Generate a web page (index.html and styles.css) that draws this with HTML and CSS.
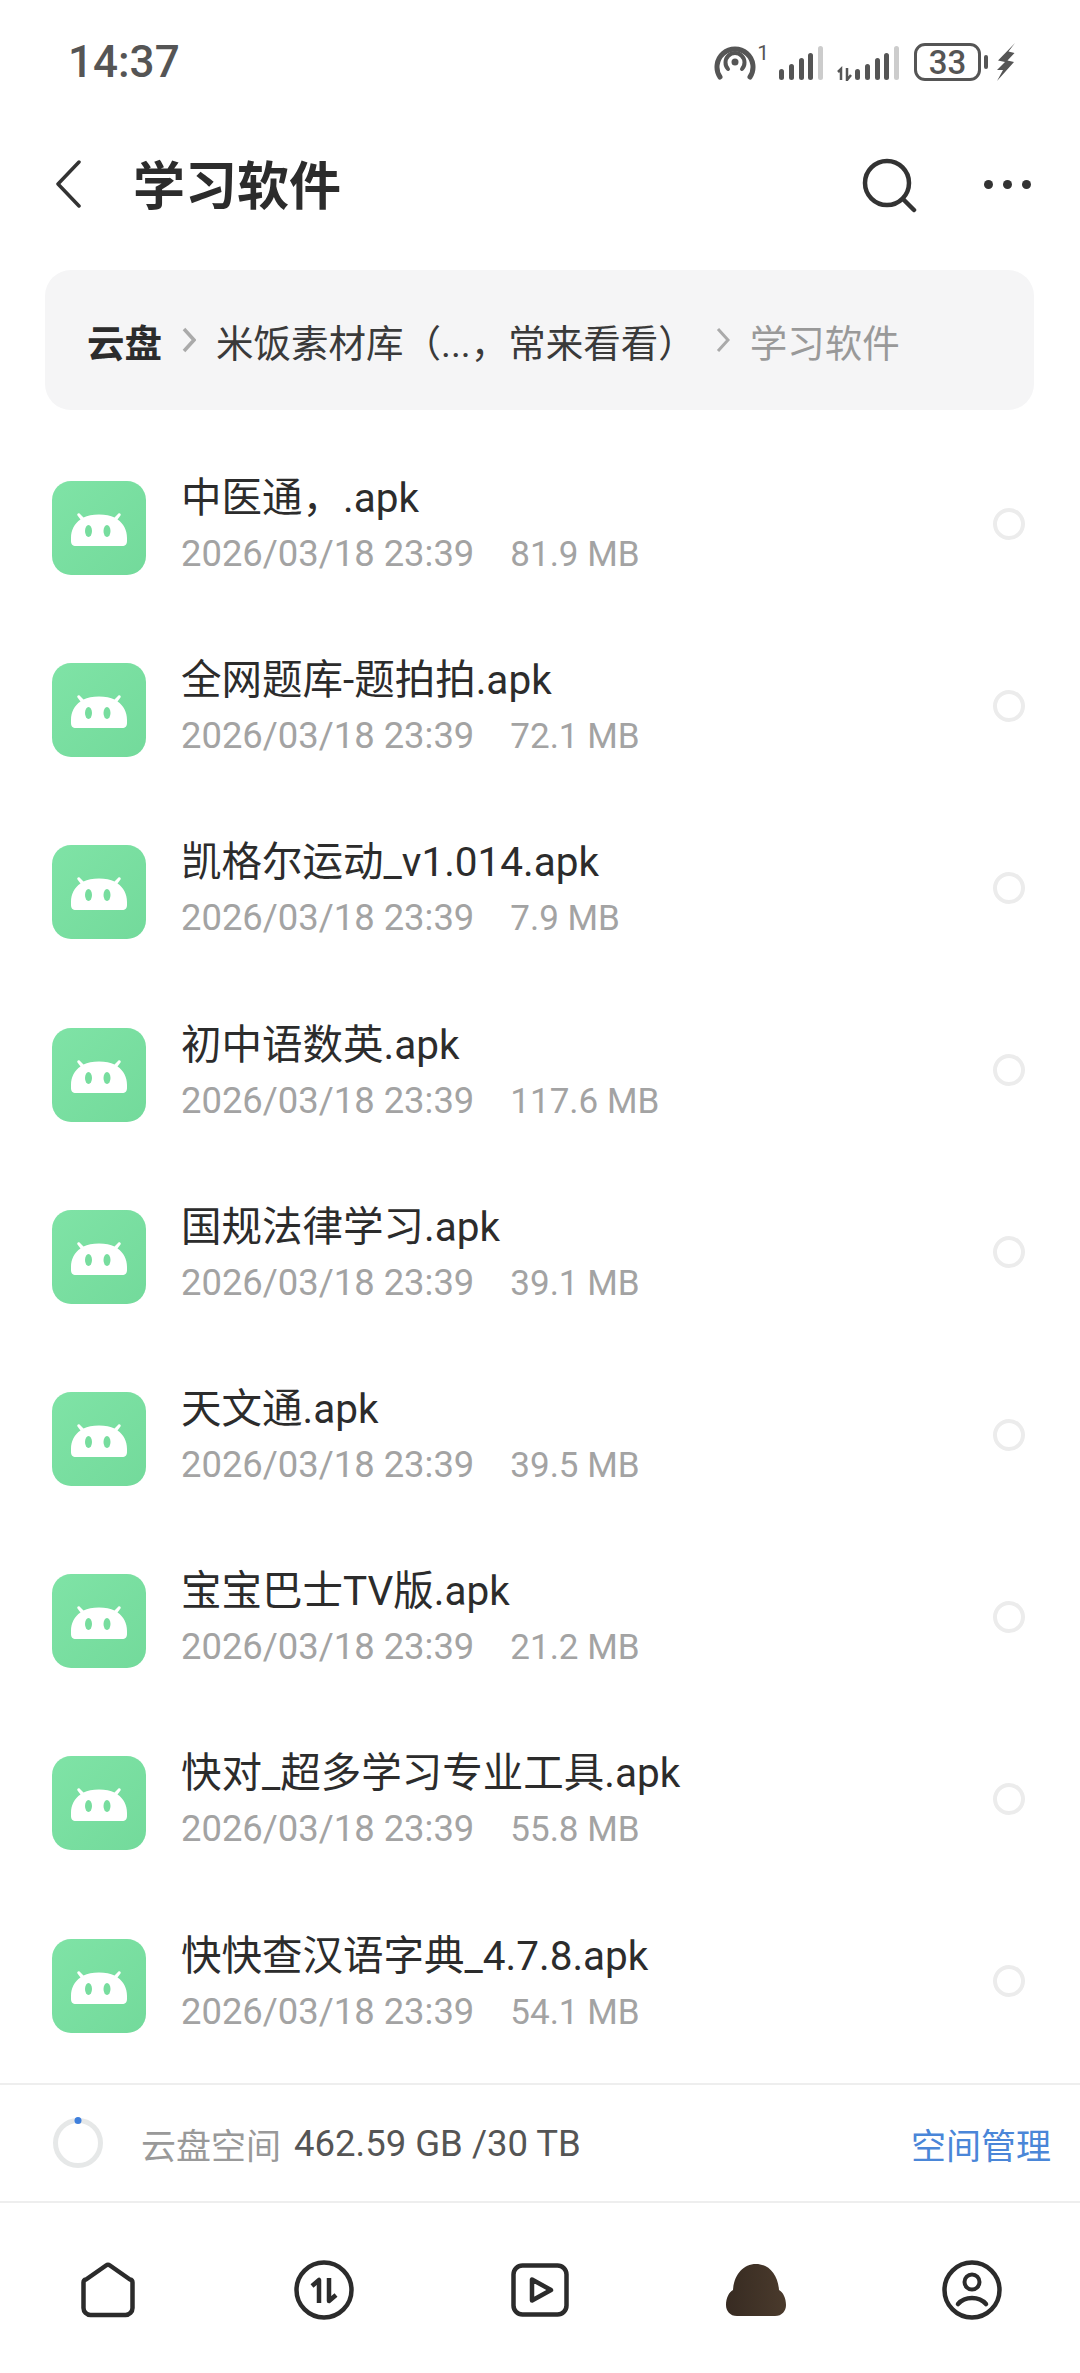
FILE: index.html
```html
<!DOCTYPE html>
<html lang="zh">
<head>
  <meta charset="utf-8">
  <title>学习软件</title>
  <link rel="stylesheet" href="styles.css">
</head>
<body>
  <svg class="defs" width="0" height="0">
    <defs>
      <linearGradient id="apk-bg" x1="0" y1="0" x2="1" y2="1">
        <stop offset="0" stop-color="#7fe3a6"/>
        <stop offset="1" stop-color="#73da9b"/>
      </linearGradient>
    </defs>
    <symbol id="apk" viewBox="0 0 94 94">
      <rect width="94" height="94" rx="19" fill="url(#apk-bg)"/>
      <path d="M24 65c-3.500 0-5-2-5-5v-3c0-8 3.500-14.500 9.500-18.500l-3-4c-1-1.500 1-3 2.300-1.700l3.700 3.700c4-2 9-3 15.500-3s11.500 1 15.500 3l3.700-3.700c1.300-1.300 3.300.2 2.300 1.700l-3 4c6 4 9.500 10.500 9.500 18.500v3c0 3-1.500 5-5 5z" fill="#fff"/>
      <ellipse cx="36.500" cy="50" rx="3.500" ry="6" fill="#77dd9e"/>
      <ellipse cx="55" cy="50" rx="3.500" ry="6" fill="#77dd9e"/>
    </symbol>
  </svg>

  <div class="status">
    <span class="time">14:37</span>
    <div class="status-icons">
      <svg class="hotspot" width="42" height="38" viewBox="0 0 42 38" fill="none" stroke="#555" stroke-linecap="round">
        <path d="M6 34A18 18 0 1 1 36 34" stroke-width="5"/>
        <path d="M14 26A9.500 9.500 0 1 1 28 26" stroke-width="4"/>
        <circle cx="21" cy="19" r="3.500" fill="#555" stroke="none"/>
      </svg>
      <span class="sup">1</span>
      <svg class="signal" width="46" height="36" viewBox="0 0 46 36">
        <rect x="1" y="24" width="5" height="11" rx="2.500" fill="#555"/>
        <rect x="11" y="19" width="5" height="16" rx="2.500" fill="#555"/>
        <rect x="21" y="13" width="5" height="22" rx="2.500" fill="#555"/>
        <rect x="30" y="8" width="5" height="27" rx="2.500" fill="#555"/>
        <rect x="40" y="1" width="5" height="34" rx="2.500" fill="#ccc"/>
      </svg>
      <svg class="signal data" width="64" height="36" viewBox="0 0 64 36">
        <path d="M2 27l3-3v11M11 23v12l4-5" fill="none" stroke="#555" stroke-width="2.500"/>
        <rect x="19" y="24" width="5" height="11" rx="2.500" fill="#555"/>
        <rect x="29" y="19" width="5" height="16" rx="2.500" fill="#555"/>
        <rect x="39" y="13" width="5" height="22" rx="2.500" fill="#555"/>
        <rect x="48" y="8" width="5" height="27" rx="2.500" fill="#555"/>
        <rect x="58" y="1" width="5" height="34" rx="2.500" fill="#ccc"/>
      </svg>
      <span class="battery">33</span>
      <span class="nub"></span>
      <svg class="bolt" width="18" height="38" viewBox="0 0 18 38">
        <path d="M18 0L1 17.500l7 1.500-8 8h6L0 38l17-19-6.500-1.500 7-7.500-6-1.500z" fill="#555"/>
      </svg>
    </div>
  </div>

  <header class="topbar">
    <svg class="back" width="26" height="48" viewBox="0 0 26 48" fill="none" stroke="#333" stroke-width="3.500" stroke-linecap="round" stroke-linejoin="round">
      <path d="M24 2L3 24l21 22"/>
    </svg>
    <h1>学习软件</h1>
    <svg class="search" width="56" height="56" viewBox="0 0 56 56" fill="none" stroke="#333" stroke-width="4.500" stroke-linecap="round">
      <circle cx="26" cy="25" r="22"/>
      <path d="M42 41l11 11"/>
    </svg>
    <div class="more"><i></i><i></i><i></i></div>
  </header>

  <nav class="crumbs">
    <b>云盘</b>
    <svg class="sep" width="14" height="26" viewBox="0 0 14 26" fill="none" stroke="#aaa" stroke-width="3.500"><path d="M2 2l10 11L2 24"/></svg>
    <span class="dir">米饭素材库（...，常来看看）</span>
    <svg class="sep" width="14" height="26" viewBox="0 0 14 26" fill="none" stroke="#aaa" stroke-width="3"><path d="M2 2l10 11L2 24"/></svg>
    <span class="here">学习软件</span>
  </nav>

  <main class="list">
    <div class="row">
      <svg class="apk"><use href="#apk"/></svg>
      <div class="info"><div class="name">中医通，.apk</div><div class="meta"><span>2026/03/18 23:39</span><span class="size">81.9 MB</span></div></div>
      <span class="radio"></span>
    </div>
    <div class="row">
      <svg class="apk"><use href="#apk"/></svg>
      <div class="info"><div class="name">全网题库-题拍拍.apk</div><div class="meta"><span>2026/03/18 23:39</span><span class="size">72.1 MB</span></div></div>
      <span class="radio"></span>
    </div>
    <div class="row">
      <svg class="apk"><use href="#apk"/></svg>
      <div class="info"><div class="name">凯格尔运动_v1.014.apk</div><div class="meta"><span>2026/03/18 23:39</span><span class="size">7.9 MB</span></div></div>
      <span class="radio"></span>
    </div>
    <div class="row">
      <svg class="apk"><use href="#apk"/></svg>
      <div class="info"><div class="name">初中语数英.apk</div><div class="meta"><span>2026/03/18 23:39</span><span class="size">117.6 MB</span></div></div>
      <span class="radio"></span>
    </div>
    <div class="row">
      <svg class="apk"><use href="#apk"/></svg>
      <div class="info"><div class="name">国规法律学习.apk</div><div class="meta"><span>2026/03/18 23:39</span><span class="size">39.1 MB</span></div></div>
      <span class="radio"></span>
    </div>
    <div class="row">
      <svg class="apk"><use href="#apk"/></svg>
      <div class="info"><div class="name">天文通.apk</div><div class="meta"><span>2026/03/18 23:39</span><span class="size">39.5 MB</span></div></div>
      <span class="radio"></span>
    </div>
    <div class="row">
      <svg class="apk"><use href="#apk"/></svg>
      <div class="info"><div class="name">宝宝巴士TV版.apk</div><div class="meta"><span>2026/03/18 23:39</span><span class="size">21.2 MB</span></div></div>
      <span class="radio"></span>
    </div>
    <div class="row">
      <svg class="apk"><use href="#apk"/></svg>
      <div class="info"><div class="name">快对_超多学习专业工具.apk</div><div class="meta"><span>2026/03/18 23:39</span><span class="size">55.8 MB</span></div></div>
      <span class="radio"></span>
    </div>
    <div class="row">
      <svg class="apk"><use href="#apk"/></svg>
      <div class="info"><div class="name">快快查汉语字典_4.7.8.apk</div><div class="meta"><span>2026/03/18 23:39</span><span class="size">54.1 MB</span></div></div>
      <span class="radio"></span>
    </div>
  </main>

  <section class="space">
    <svg class="ring" width="54" height="54" viewBox="0 0 54 54">
      <circle cx="27" cy="27" r="22.500" fill="none" stroke="#e6e8e8" stroke-width="5"/>
      <circle cx="27" cy="4.500" r="3.500" fill="#3f7fdc"/>
    </svg>
    <span class="space-label">云盘空间</span>
    <span class="space-value">462.59 GB /30 TB</span>
    <a class="space-manage">空间管理</a>
  </section>

  <footer class="tabs">
    <div class="tab">
      <svg width="54" height="56" viewBox="0 0 54 56" fill="none" stroke="#2b2b2b" stroke-width="4.500" stroke-linejoin="round">
        <path d="M25 3.500a3.500 3.500 0 0 1 4 0l20 14a3 3 0 0 1 2.500 3V46a7 7 0 0 1-7 7H9.500a7 7 0 0 1-7-7V20.500a3 3 0 0 1 2.500-3z"/>
      </svg>
    </div>
    <div class="tab">
      <svg width="60" height="60" viewBox="0 0 60 60" fill="none" stroke="#2b2b2b">
        <circle cx="30" cy="30" r="27.500" stroke-width="4.500"/>
        <path d="M18 26l7-6v23M35 18v23l7-6" stroke-width="4.500" stroke-linejoin="round"/>
      </svg>
    </div>
    <div class="tab">
      <svg width="58" height="54" viewBox="0 0 58 54" fill="none" stroke="#2b2b2b" stroke-linejoin="round">
        <rect x="2.500" y="2.500" width="53" height="49" rx="9" stroke-width="4.500"/>
        <path d="M21 16.500v21l19-10.500z" stroke-width="4.500"/>
      </svg>
    </div>
    <div class="tab">
      <svg width="60" height="54" viewBox="0 0 60 54">
        <defs>
          <linearGradient id="cloud" x1="0" y1="0" x2="1" y2="0">
            <stop offset="0" stop-color="#372b22"/>
            <stop offset="1" stop-color="#4a3a2c"/>
          </linearGradient>
        </defs>
        <path d="M11 53C4 53 0 48 0 42 0 35 3 29 7 27 8 12 17 1 30 1s22 11 23 26c4 2 7 8 7 15 0 6-4 11-11 11z" fill="url(#cloud)"/>
      </svg>
    </div>
    <div class="tab">
      <svg width="60" height="60" viewBox="0 0 60 60" fill="none" stroke="#2b2b2b" stroke-linecap="round">
        <circle cx="30" cy="30" r="27.500" stroke-width="4.500"/>
        <circle cx="30" cy="22" r="7.500" stroke-width="4"/>
        <path d="M16 44c7-8 21-8 28 0" stroke-width="4.500"/>
      </svg>
    </div>
  </footer>
</body>
</html>
```

FILE: styles.css
```css
* {
  box-sizing: border-box;
  margin: 0;
  padding: 0;
}

html,
body {
  width: 1080px;
  height: 2373px;
  overflow: hidden;
  background-color: #fff;
}

body {
  display: flex;
  flex-direction: column;
  font-family: Roboto, "Noto Sans CJK SC", sans-serif;
  color: #2c2c2c;
}

/* only holds the shared symbol, takes no room */
.defs {
  position: absolute;
  width: 0;
  height: 0;
}

/* status bar */
.status {
  height: 124px;
  padding: 0 65px 0 68px;
  display: flex;
  align-items: center;
  justify-content: space-between;
}

.time {
  font-size: 44px;
  font-weight: 500;
  color: #555;
}

.status-icons {
  display: flex;
  align-items: center;
}

.sup {
  align-self: flex-start;
  font-size: 21px;
  color: #555;
  margin-left: 1px;
  line-height: 20px;
}

.signal {
  margin-left: 9px;
  margin-top: 2px;
}

.signal.data {
  margin-left: 12px;
}

.battery {
  margin-left: 14px;
  width: 67px;
  height: 38px;
  border: 3px solid #555;
  border-radius: 11px;
  display: flex;
  align-items: center;
  justify-content: center;
  font-size: 33px;
  font-weight: 500;
  color: #555;
}

.nub {
  margin-left: 3px;
  width: 4px;
  height: 14px;
  border-radius: 2px;
  background-color: #555;
}

.bolt {
  margin-left: 9px;
}

/* title row */
.topbar {
  height: 120px;
  padding: 0 49px 0 55px;
  display: flex;
  align-items: center;
}

.back {
  margin-right: 52px;
}

.topbar h1 {
  flex: 1;
  padding-bottom: 4px;
  font-size: 52px;
  font-weight: 700;
  color: #2c2c2c;
}

.search {
  margin-right: 67px;
  margin-top: 4px;
}

.more {
  display: flex;
  gap: 10px;
}

.more i {
  width: 9px;
  height: 9px;
  border-radius: 50%;
  background-color: #333;
}

/* breadcrumb */
.crumbs {
  margin: 26px 46px 0 45px;
  height: 140px;
  padding: 0 41px 0 42px;
  display: flex;
  align-items: center;
  border-radius: 26px;
  background-color: #f5f5f6;
  font-size: 37.500px;
}

.crumbs b {
  font-weight: 700;
  color: #2c2c2c;
}

.crumbs .sep {
  flex: none;
  margin: 0 20px;
}

.dir {
  white-space: nowrap;
  color: #3a3a3a;
}

.here {
  white-space: nowrap;
  color: #999;
}

/* file list */
.list {
  flex: 1;
  padding: 27px 0 0 52px;
  overflow: hidden;
}

.row {
  height: 182.200px;
  padding-right: 55px;
  display: flex;
  align-items: center;
}

.apk {
  flex: none;
  width: 94px;
  height: 94px;
  margin-right: 35px;
}

.info {
  flex: 1;
  min-width: 0;
  margin-bottom: 7px;
}

.name {
  font-size: 40.500px;
  line-height: 54px;
  white-space: nowrap;
  color: #2c2c2c;
}

.meta {
  display: flex;
  align-items: baseline;
  gap: 36px;
  font-size: 36.400px;
  line-height: 46px;
  margin-top: 6px;
  color: #a3a3a3;
}

.size {
  font-size: 35px;
}

.radio {
  flex: none;
  width: 32px;
  height: 32px;
  margin-bottom: 9px;
  border: 4.500px solid #ececec;
  border-radius: 50%;
}

/* storage bar */
.space {
  height: 120px;
  padding: 0 29px 0 51px;
  display: flex;
  align-items: center;
  border-top: 2px solid #eee;
  border-bottom: 2px solid #eee;
}

.ring {
  margin-right: 36px;
}

.space-label {
  font-size: 35px;
  color: #999;
  margin-right: 13px;
}

.space-value {
  flex: 1;
  font-size: 36.500px;
  color: #555;
}

.space-manage {
  font-size: 35px;
  color: #4a86d8;
}

/* bottom tabs */
.tabs {
  height: 170px;
  display: grid;
  grid-template-columns: repeat(5, 1fr);
  align-items: start;
}

.tab {
  height: 170px;
  padding-top: 3px;
  display: flex;
  align-items: center;
  justify-content: center;
}
```
